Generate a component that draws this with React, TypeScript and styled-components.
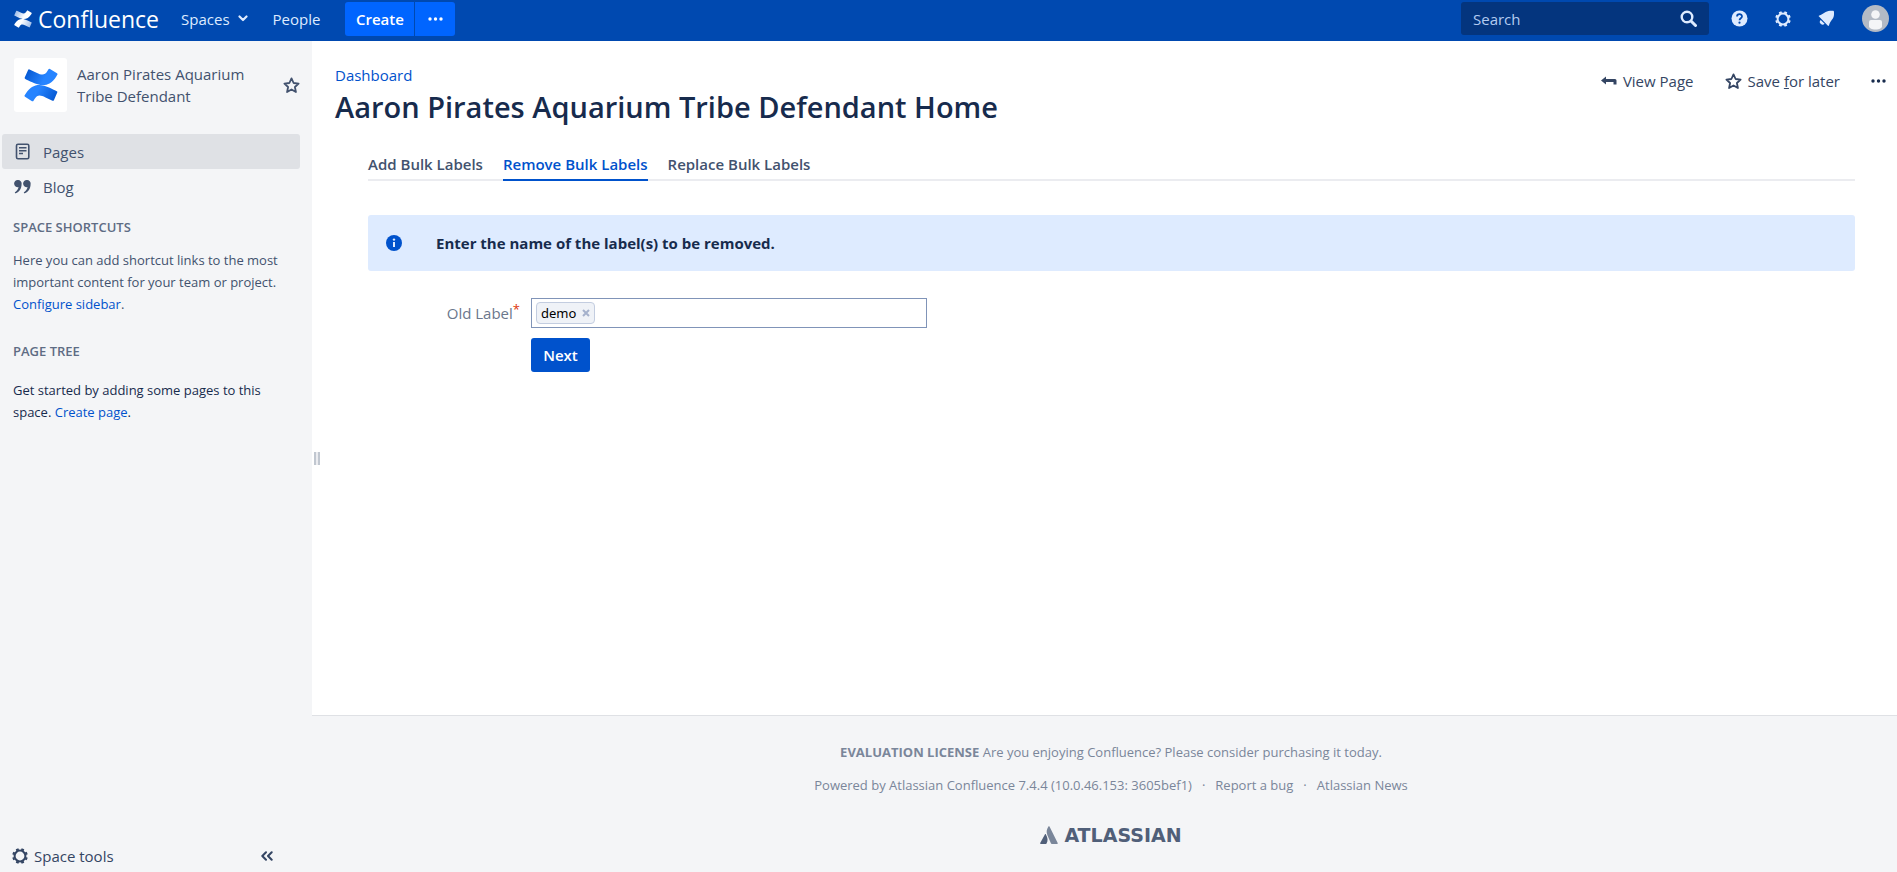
import React from "react";
import styled, { createGlobalStyle, css } from "styled-components";

const Global = createGlobalStyle`
  * { box-sizing: border-box; }
  html, body, #root { height: 100%; }
  body {
    margin: 0;
    background: #ffffff;
    color: #172b4d;
    font-family: "Open Sans", "Noto Sans", sans-serif;
    font-size: 15px;
    line-height: 22px;
  }
  a { color: #0052cc; text-decoration: none; }
  svg { display: block; flex: none; }
  button { font: inherit; cursor: pointer; }
`;

const Page = styled.div`
  min-height: 100vh;
  display: flex;
  flex-direction: column;
`;

const Header = styled.header`
  height: 41px;
  padding: 0 8px 4px 14px;
  display: flex;
  align-items: center;
  background: #0049b0;
  color: #deebff;
`;

const Logo = styled.a`
  display: flex;
  align-items: center;
  gap: 6px;
  margin-right: 22px;
  color: #ffffff;
  font-size: 23px;
  line-height: 32px;
`;

const HeaderLink = styled.a`
  display: flex;
  align-items: center;
  gap: 8px;
  margin-right: 25px;
  color: #deebff;
`;

const CreateGroup = styled.div`
  display: flex;
  gap: 1px;
  height: 34px;
`;

const CreateButton = styled.button<{ $side: "left" | "right" }>`
  display: flex;
  align-items: center;
  justify-content: center;
  width: ${(p) => (p.$side === "left" ? 69 : 40)}px;
  padding: 0;
  border: 0;
  border-radius: ${(p) => (p.$side === "left" ? "3px 0 0 3px" : "0 3px 3px 0")};
  background: #0065ff;
  color: #ffffff;
  font-weight: 600;
`;

const Search = styled.form`
  display: flex;
  align-items: center;
  width: 248px;
  height: 33px;
  margin-left: auto;
  padding: 0 12px;
  border-radius: 3px;
  background: #04357e;
`;

const SearchInput = styled.input`
  flex: 1;
  min-width: 0;
  padding: 0;
  border: 0;
  outline: 0;
  background: none;
  color: #b3cbf0;
  font: inherit;
  &::placeholder { color: #b3cbf0; opacity: 1; }
`;

const IconButton = styled.button`
  display: flex;
  padding: 0;
  border: 0;
  background: none;
  color: inherit;
`;

const HeaderIcons = styled.nav`
  display: flex;
  align-items: center;
  gap: 27px;
  margin-left: 22px;
`;

const Body = styled.div`
  flex: 1;
  display: flex;
`;

const Sidebar = styled.aside`
  width: 312px;
  flex: none;
  display: flex;
  flex-direction: column;
  background: #f4f5f7;
  color: #42526e;
`;

const SpaceHead = styled.div`
  display: flex;
  align-items: center;
  gap: 10px;
  padding: 17px 12px 22px 14px;
`;

const SpaceLogo = styled.a`
  display: flex;
  align-items: center;
  justify-content: center;
  width: 53px;
  height: 54px;
  border-radius: 3px;
  background: #ffffff;
`;

const SpaceName = styled.a`
  flex: 1;
  color: #42526e;
`;

const NavItem = styled.a<{ $active?: boolean }>`
  display: flex;
  align-items: center;
  gap: 12px;
  height: 35px;
  margin: 0 12px 0 2px;
  padding: 0 12px;
  border-radius: 3px;
  color: #42526e;
  background: ${(p) => (p.$active ? "#dfe1e5" : "transparent")};
`;

const SideSection = styled.section<{ $tree?: boolean }>`
  padding: 12px 13px 0;
  margin-bottom: ${(p) => (p.$tree ? 0 : 13)}px;
  font-size: 13px;
  ${(p) => p.$tree && css`color: #172b4d;`}
  h2 {
    margin: 0 0 ${(p) => (p.$tree ? 17 : 11)}px;
    color: #5e6c84;
    font-size: 13px;
    font-weight: 600;
    line-height: 22px;
  }
  p { margin: 0; }
`;

const SideFooter = styled.div`
  display: flex;
  align-items: center;
  justify-content: space-between;
  margin-top: auto;
  padding: 0 39px 5px 12px;
  color: #344563;
`;

const ToolButton = styled(IconButton)`
  align-items: center;
  gap: 6px;
`;

const Main = styled.div`
  flex: 1;
  min-width: 0;
  display: flex;
  flex-direction: column;
`;

const Content = styled.main`
  flex: 1;
  display: flex;
`;

const Grip = styled.div`
  align-self: center;
  width: 6px;
  height: 13px;
  margin: 160px 0 0 2px;
  border: solid #c1c7d0;
  border-width: 0 2px;
  background: #ebecf0;
`;

const Article = styled.div`
  flex: 1;
  padding: 23px 11px 20px 15px;
`;

const TitleBar = styled.div`
  display: flex;
  justify-content: space-between;
  align-items: flex-start;
`;

const Title = styled.h1`
  margin: 0;
  font-size: 29px;
  font-weight: 600;
  line-height: 42px;
`;

const Actions = styled.div`
  display: flex;
  align-items: center;
  gap: 31px;
  padding-top: 6px;
`;

const Action = styled.a`
  display: flex;
  align-items: center;
  gap: 6px;
  color: #344563;
`;

const Panel = styled.div`
  padding: 25px 31px 0 33px;
`;

const Tabs = styled.nav`
  display: flex;
  gap: 20px;
  border-bottom: 2px solid #ebecf0;
`;

const Tab = styled.a<{ $active?: boolean }>`
  margin-bottom: -2px;
  padding-bottom: 4px;
  border-bottom: 2px solid ${(p) => (p.$active ? "#0052cc" : "transparent")};
  color: ${(p) => (p.$active ? "#0052cc" : "#42526e")};
  font-weight: 600;
`;

const Info = styled.div`
  display: flex;
  align-items: center;
  gap: 34px;
  height: 56px;
  margin: 34px 0 27px;
  padding: 0 18px;
  border-radius: 3px;
  background: #deebff;
  font-weight: 700;
`;

const Form = styled.form`
  display: grid;
  grid-template-columns: 152px 396px;
  column-gap: 11px;
  row-gap: 10px;
`;

const Label = styled.label`
  display: flex;
  align-items: center;
  justify-content: flex-end;
  color: #6b778c;
`;

const Required = styled.span`
  align-self: flex-start;
  color: #de350b;
  font-size: 13px;
  line-height: 22px;
`;

const TokenField = styled.div`
  display: flex;
  align-items: center;
  height: 30px;
  padding: 0 4px;
  border: 1px solid #8094b8;
`;

const Token = styled.span`
  display: flex;
  align-items: center;
  gap: 6px;
  height: 22px;
  padding: 0 4px;
  border: 1px solid #c3cde0;
  border-radius: 4px;
  background: #eff2f7;
  color: #000000;
  font: 13px/20px "Noto Sans", sans-serif;
`;

const TokenInput = styled.input`
  flex: 1;
  min-width: 0;
  border: 0;
  outline: 0;
  background: none;
  font: inherit;
`;

const Next = styled.button`
  grid-column: 2;
  justify-self: start;
  width: 59px;
  height: 34px;
  padding: 0;
  border: 0;
  border-radius: 3px;
  background: #0052cc;
  color: #ffffff;
  font-weight: 600;
`;

const Footer = styled.footer`
  display: flex;
  flex-direction: column;
  align-items: center;
  gap: 11px;
  height: 157px;
  padding: 25px 0 0 13px;
  border-top: 1px solid #dfe1e5;
  background: #f4f5f7;
  color: #7a869a;
  font-size: 13px;
  a { color: #7a869a; }
  p { margin: 0; }
`;

const FooterLinks = styled.div`
  display: flex;
  gap: 10px;
`;

const Atlassian = styled.a`
  display: flex;
  align-items: center;
  gap: 6px;
  margin-top: 16px;
  && { color: #505f79; }
  font: bold 19px/24px "DejaVu Sans", sans-serif;
`;

const ConfluenceMark = ({ size, white }: { size: number; white?: boolean }) => {
  const id = white ? "w" : "b";
  const dark = white ? "#8fb2e5" : "#0052cc";
  const light = white ? "#ffffff" : "#2684ff";
  return (
    <svg width={size} height={size} viewBox="0 0 64 64" aria-hidden="true">
      <defs>
        <linearGradient id={id + 1} x1="60" y1="67" x2="20" y2="44" gradientUnits="userSpaceOnUse">
          <stop offset="0" stopColor={dark} />
          <stop offset="0.9" stopColor={light} />
        </linearGradient>
        <linearGradient id={id + 2} x1="4" y1="-3" x2="44" y2="20" gradientUnits="userSpaceOnUse">
          <stop offset="0" stopColor={dark} />
          <stop offset="0.9" stopColor={light} />
        </linearGradient>
      </defs>
      <path fill={`url(#${id}1)`} d="M3.200 48.300c-.6 1-1.400 2.200-2 3.200a2 2 0 0 0 .7 2.800l13.200 8.100a2 2 0 0 0 2.800-.7c.5-.9 1.200-2.100 2-3.300 5.400-8.900 10.800-7.800 20.600-3.100l13.100 6.200a2 2 0 0 0 2.700-1l6.300-14.200a2 2 0 0 0-1-2.700c-2.800-1.300-8.300-3.900-13.200-6.300-17.900-8.700-33.100-8.100-45.200 11z" />
      <path fill={`url(#${id}2)`} d="M60.800 15.800c.6-1 1.400-2.200 2-3.200a2 2 0 0 0-.7-2.800L48.900 1.700a2 2 0 0 0-2.800.7c-.5.900-1.200 2.100-2 3.300-5.400 8.900-10.800 7.800-20.600 3.100L10.400 2.600a2 2 0 0 0-2.700 1L1.400 17.800a2 2 0 0 0 1 2.700c2.800 1.300 8.300 3.900 13.200 6.300 17.900 8.700 33.100 8.100 45.200-11z" />
    </svg>
  );
};

const Star = () => (
  <svg width="17" height="17" viewBox="0 0 17 17" fill="none" stroke="currentColor" strokeWidth="1.800" strokeLinejoin="round" aria-hidden="true">
    <path d="M8.500 1.400l2.100 4.600 5 .6-3.700 3.400 1 5-4.400-2.500L4.100 15l1-5L1.400 6.600l5-.6z" />
  </svg>
);

const Gear = ({ size = 16 }: { size?: number }) => (
  <svg width={size} height={size} viewBox="0 0 16 16" fill="none" stroke="currentColor" aria-hidden="true">
    <circle cx="8" cy="8" r="5.400" strokeWidth="2" />
    {[22.5, 67.5, 112.5, 157.5, 202.5, 247.5, 292.5, 337.5].map((a) => (
      <path key={a} d="M8 2.200V.2" strokeWidth="2.800" transform={`rotate(${a} 8 8)`} />
    ))}
  </svg>
);

const Dots = () => (
  <svg width="15" height="4" viewBox="0 0 15 4" fill="currentColor" aria-hidden="true">
    <circle cx="2" cy="2" r="1.700" />
    <circle cx="7.500" cy="2" r="1.700" />
    <circle cx="13" cy="2" r="1.700" />
  </svg>
);

export default function App() {
  return (
    <Page>
      <Global />
      <Header>
        <Logo href="#">
          <ConfluenceMark size={18} white />
          Confluence
        </Logo>
        <HeaderLink href="#">
          Spaces
          <svg width="10" height="7" viewBox="0 0 10 7" fill="none" stroke="currentColor" strokeWidth="2.200" strokeLinecap="round" strokeLinejoin="round" aria-hidden="true">
            <path d="M1.500 1.500L5 5l3.500-3.500" />
          </svg>
        </HeaderLink>
        <HeaderLink href="#">People</HeaderLink>
        <CreateGroup>
          <CreateButton $side="left">Create</CreateButton>
          <CreateButton $side="right" aria-label="Create from template"><Dots /></CreateButton>
        </CreateGroup>
        <Search>
          <SearchInput type="search" placeholder="Search" aria-label="Search" />
          <IconButton type="submit" aria-label="Run search">
            <svg width="17" height="17" viewBox="0 0 17 17" fill="none" stroke="currentColor" aria-hidden="true">
              <circle cx="7" cy="7" r="5.300" strokeWidth="2.400" />
              <path d="M11 11l4.500 4.500" strokeWidth="3" strokeLinecap="round" />
            </svg>
          </IconButton>
        </Search>
        <HeaderIcons>
          <IconButton aria-label="Help">
            <svg width="17" height="17" viewBox="0 0 17 17" aria-hidden="true">
              <circle cx="8.500" cy="8.500" r="8" fill="currentColor" />
              <path d="M6 6.600c0-3.200 5-3.200 5-.2 0 1.800-2.500 1.900-2.500 3.900" fill="none" stroke="#0049b0" strokeWidth="1.700" />
              <circle cx="8.500" cy="12.700" r="1.100" fill="#0049b0" />
            </svg>
          </IconButton>
          <IconButton aria-label="Administration"><Gear /></IconButton>
          <IconButton aria-label="Notifications">
            <svg width="17" height="17" viewBox="0 0 17 17" fill="currentColor" aria-hidden="true">
              <path d="M1.300 5.400C5.300 4.600 7.500 1 12 .8h2.700c.8 0 1.300.5 1.300 1.200v2.600c0 4.300-3.900 6.400-5 10.700-.2.700-.8.8-1.300.3L1 6.600c-.5-.5-.4-1 .3-1.200z" />
              <path d="M2.700 9.900l3.900 3.900a2.600 2.600 0 1 1-3.900-3.900z" />
            </svg>
          </IconButton>
          <IconButton aria-label="User profile">
            <svg width="27" height="27" viewBox="0 0 27 27" aria-hidden="true">
              <circle cx="13.500" cy="13.500" r="13.500" fill="#b3bac5" />
              <circle cx="13.500" cy="9.500" r="4.300" fill="#f4f5f7" />
              <path d="M7 17a2 2 0 0 1 2-2h9a2 2 0 0 1 2 2v4.500c0 1.500-2.500 3-6.500 3S7 23 7 21.500z" fill="#f4f5f7" />
            </svg>
          </IconButton>
        </HeaderIcons>
      </Header>
      <Body>
        <Sidebar>
          <SpaceHead>
            <SpaceLogo href="#" aria-label="Space home"><ConfluenceMark size={34} /></SpaceLogo>
            <SpaceName href="#">Aaron Pirates Aquarium<br />Tribe Defendant</SpaceName>
            <IconButton aria-label="Add to my spaces"><Star /></IconButton>
          </SpaceHead>
          <NavItem href="#" $active>
            <svg width="17" height="17" viewBox="0 0 17 17" fill="none" stroke="currentColor" strokeWidth="1.600" aria-hidden="true">
              <rect x="2.500" y="1.200" width="12.300" height="14.600" rx="1.500" />
              <path d="M5 4.800h7.500M5 7.800h7.500M5 10.500h4" strokeWidth="1.500" />
            </svg>
            Pages
          </NavItem>
          <NavItem href="#">
            <svg width="17" height="17" viewBox="0 0 17 17" fill="currentColor" aria-hidden="true">
              <path d="M4 2a3.500 3.500 0 0 1 3.600 4c0 4.600-2.400 8.200-5.900 9.200-.8.200-1.200-.7-.4-1.200 1.800-1.200 2.900-2.900 3.200-4.900A3.600 3.600 0 1 1 4 2z" />
              <path d="M13 2a3.500 3.500 0 0 1 3.600 4c0 4.600-2.400 8.200-5.900 9.200-.8.200-1.200-.7-.4-1.200 1.800-1.200 2.900-2.900 3.200-4.900A3.600 3.600 0 1 1 13 2z" />
            </svg>
            Blog
          </NavItem>
          <SideSection>
            <h2>SPACE SHORTCUTS</h2>
            <p>Here you can add shortcut links to the most<br />important content for your team or project.<br /><a href="#">Configure sidebar</a>.</p>
          </SideSection>
          <SideSection $tree>
            <h2>PAGE TREE</h2>
            <p>Get started by adding some pages to this<br />space. <a href="#">Create page</a>.</p>
          </SideSection>
          <SideFooter>
            <ToolButton><Gear />Space tools</ToolButton>
            <IconButton aria-label="Collapse sidebar">
              <svg width="12" height="10" viewBox="0 0 12 10" fill="none" stroke="currentColor" strokeWidth="2" strokeLinecap="round" strokeLinejoin="round" aria-hidden="true">
                <path d="M5 1.200L1.300 5 5 8.800M10.700 1.200L7 5l3.700 3.800" />
              </svg>
            </IconButton>
          </SideFooter>
        </Sidebar>
        <Main>
          <Content>
            <Grip />
            <Article>
              <TitleBar>
                <div>
                  <a href="#">Dashboard</a>
                  <Title>Aaron Pirates Aquarium Tribe Defendant Home</Title>
                </div>
                <Actions>
                  <Action href="#">
                    <svg width="16" height="10" viewBox="0 0 16 10" fill="currentColor" aria-hidden="true">
                      <path d="M0 4.500L5 .5v2.600h9a1.500 1.500 0 0 1 1.500 1.500V8.500h-3V6H5v2.500z" />
                    </svg>
                    View Page
                  </Action>
                  <Action href="#">
                    <Star />
                    <span>Save <u>f</u>or later</span>
                  </Action>
                  <IconButton aria-label="More actions"><Dots /></IconButton>
                </Actions>
              </TitleBar>
              <Panel>
                <Tabs>
                  <Tab href="#">Add Bulk Labels</Tab>
                  <Tab href="#" $active>Remove Bulk Labels</Tab>
                  <Tab href="#">Replace Bulk Labels</Tab>
                </Tabs>
                <Info>
                  <svg width="16" height="16" viewBox="0 0 16 16" aria-hidden="true">
                    <circle cx="8" cy="8" r="8" fill="#0052cc" />
                    <path d="M8 7v5" stroke="#deebff" strokeWidth="2" />
                    <circle cx="8" cy="4.600" r="1.200" fill="#deebff" />
                  </svg>
                  Enter the name of the label(s) to be removed.
                </Info>
                <Form>
                  <Label htmlFor="old-label">Old Label<Required>*</Required></Label>
                  <TokenField>
                    <Token>
                      demo
                      <IconButton type="button" aria-label="Remove demo">
                        <svg width="8" height="8" viewBox="0 0 8 8" fill="none" stroke="#a5b1cc" strokeWidth="2" aria-hidden="true">
                          <path d="M1 1l6 6M7 1L1 7" />
                        </svg>
                      </IconButton>
                    </Token>
                    <TokenInput id="old-label" type="text" />
                  </TokenField>
                  <Next type="submit">Next</Next>
                </Form>
              </Panel>
            </Article>
          </Content>
          <Footer>
            <p><strong>EVALUATION LICENSE</strong> Are you enjoying Confluence? Please consider purchasing it today.</p>
            <FooterLinks>
              <span>Powered by <a href="#">Atlassian Confluence</a> 7.4.4 (10.0.46.153: 3605bef1)</span>
              <span>·</span>
              <a href="#">Report a bug</a>
              <span>·</span>
              <a href="#">Atlassian News</a>
            </FooterLinks>
            <Atlassian href="#">
              <svg width="18" height="18" viewBox="0 0 18 18" aria-hidden="true">
                <path fill="#7a869a" d="M8.400.5c.3-.5.800-.5 1.100 0L17.700 17c.2.500 0 .9-.5.900h-5.400c-.4 0-.6-.2-.8-.5L7.500 9.500C6 6 6.600 3.500 8.400.5z" />
                <path fill="#505f79" d="M5 8.300c.3-.4.700-.4.900.1 2 3.300 2.200 6.400.6 9-.2.400-.4.500-.8.500H.7c-.5 0-.7-.4-.5-.9z" />
              </svg>
              ATLASSIAN
            </Atlassian>
          </Footer>
        </Main>
      </Body>
    </Page>
  );
}
